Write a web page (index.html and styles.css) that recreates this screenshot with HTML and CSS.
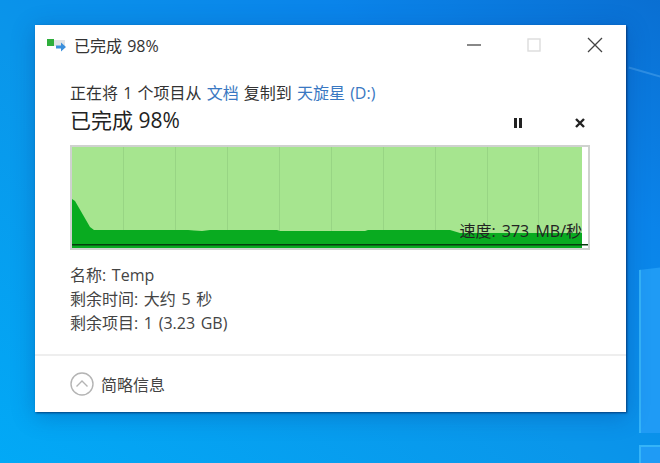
FILE: index.html
```html
<!DOCTYPE html>
<html lang="zh-CN">
<head>
    <meta charset="UTF-8">
    <meta name="viewport" content="width=device-width, initial-scale=1.0">
    <title>已完成 98%</title>
    <link rel="stylesheet" href="styles.css">
</head>
<body>
    <div class="desktop">
        <div class="streak"></div>
        <div class="logo-pane pane-top"></div>
        <div class="logo-pane pane-bottom"></div>

        <div class="copy-window">
            <div class="title-bar">
                <svg class="title-icon" width="20" height="16" viewBox="0 0 20 16">
                    <rect x="0" y="2" width="7" height="7" fill="#2fae3c"/>
                    <rect x="7" y="3" width="11" height="6" fill="#dfe3e6"/>
                    <path d="M9 8.500h5V5.500l5 4.500-5 4.500v-3H9z" fill="#3a8fdc"/>
                </svg>
                <span class="title-text">已完成 98%</span>
                <div class="window-controls">
                    <svg width="14" height="14" viewBox="0 0 14 14"><path d="M0 7h14" stroke="#555" stroke-width="1.4"/></svg>
                    <svg width="14" height="14" viewBox="0 0 14 14"><rect x="1" y="1" width="12" height="12" fill="none" stroke="#dcdcdc" stroke-width="1.4"/></svg>
                    <svg width="16" height="16" viewBox="0 0 16 16"><path d="M1 1l14 14M15 1L1 15" stroke="#444" stroke-width="1.3"/></svg>
                </div>
            </div>

            <div class="content">
                <p class="copy-line">正在将 1 个项目从 <a class="link">文档</a> 复制到 <a class="link">天旋星 (D:)</a></p>
                <div class="progress-head">
                    <h1>已完成 98%</h1>
                    <div class="progress-actions">
                        <svg width="12" height="12" viewBox="0 0 12 12"><path d="M2 1h3v10H2zM7 1h3v10H7z" fill="#222"/></svg>
                        <svg width="12" height="12" viewBox="0 0 12 12"><path d="M2 2l8 8M10 2l-8 8" stroke="#222" stroke-width="2.4"/></svg>
                    </div>
                </div>

                <div class="graph">
                    <svg class="graph-svg" width="516" height="101" viewBox="0 0 516 101">
                        <rect x="0" y="0" width="510" height="101" fill="#a6e58f"/>
                        <path d="M51.500 0V84M103.500 0V84M155.500 0V84M207.500 0V84M259.500 0V84M311.500 0V84M363.500 0V84M415.500 0V84M466.500 0V84" stroke="#98d584" stroke-width="1"/>
                        <path d="M0 52L3 54L18 80L22 83H116L122 83.500L130 84L138 83H205L208 84H293L296 83H378L388 86H510V101H0Z" fill="#09ab20"/>
                        <rect x="0" y="97" width="516" height="1.500" fill="#063d0e"/>
                    </svg>
                    <span class="speed">速度: 373 MB/秒</span>
                </div>

                <div class="details">
                    <div>名称: Temp</div>
                    <div>剩余时间: 大约 5 秒</div>
                    <div>剩余项目: 1 (3.23 GB)</div>
                </div>
            </div>

            <div class="footer">
                <svg width="24" height="24" viewBox="0 0 24 24">
                    <circle cx="12" cy="12" r="11" fill="none" stroke="#b4b4b4" stroke-width="1.4"/>
                    <path d="M6.500 14.500L12 9l5.500 5.500" fill="none" stroke="#b4b4b4" stroke-width="1.4"/>
                </svg>
                <span>简略信息</span>
            </div>
        </div>
    </div>
</body>
</html>
```

FILE: styles.css
```css
html, body {
    margin: 0;
    padding: 0;
}
body {
    font-family: "Open Sans", "Noto Sans CJK SC", sans-serif;
    color: #333;
}
.desktop {
    position: relative;
    width: 660px;
    height: 463px;
    padding: 25px 0 0 35px;
    box-sizing: border-box;
    overflow: hidden;
    background: linear-gradient(to top right, #02a9f6 0%, #0a96ea 45%, #0a84ea 75%, #0a6fd2 100%);
}
.streak {
    position: absolute;
    top: 72px;
    left: 628px;
    width: 40px;
    height: 2px;
    background: rgba(130, 200, 250, 0.3);
    transform: rotate(16deg);
}
.logo-pane {
    position: absolute;
    left: 639px;
    width: 30px;
    background: #1f9bf5;
    border-left: 2px solid #35b4f8;
}
.pane-top {
    top: 266px;
    height: 167px;
    clip-path: polygon(0 4px, 100% 0, 100% 100%, 0 100%);
}
.pane-bottom {
    top: 445px;
    height: 30px;
    border-top: 2px solid #35b4f8;
}
.copy-window {
    position: relative;
    width: 591px;
    height: 387px;
    background: #fff;
    box-shadow: 1px 1px 2px rgba(0, 30, 80, 0.7), 0 4px 22px rgba(0, 50, 130, 0.3);
    display: flex;
    flex-direction: column;
}
.title-bar {
    display: flex;
    align-items: center;
    height: 40px;
    padding-left: 12px;
}
.title-icon {
    margin-right: 7px;
}
.title-text {
    font-size: 16px;
    word-spacing: 1px;
    color: #333;
}
.window-controls {
    display: flex;
    align-items: center;
    gap: 46px;
    margin-left: auto;
    margin-right: 23px;
}
.content {
    flex: 1;
    padding: 18px 35px 0;
}
.copy-line {
    margin: 0;
    font-size: 16px;
    line-height: 20px;
    word-spacing: 1px;
    color: #333;
}
.link {
    color: #3a78c2;
}
.progress-head {
    display: flex;
    align-items: center;
    justify-content: space-between;
    height: 28px;
    margin-top: 2px;
}
h1 {
    margin: 0;
    font-size: 21px;
    font-weight: 400;
    color: #222;
}
.progress-actions {
    display: flex;
    gap: 50px;
    margin: 8px 5px 0 0;
}
.graph {
    position: relative;
    width: 516px;
    height: 101px;
    margin-top: 12px;
    border: 2px solid #cfd2cf;
}
.graph-svg {
    display: block;
}
.speed {
    position: absolute;
    right: 6px;
    bottom: 7px;
    font-size: 16px;
    line-height: 20px;
    word-spacing: 2px;
    color: #222;
}
.details {
    margin-top: 13px;
    font-size: 16px;
    line-height: 24px;
    word-spacing: 1.5px;
    color: #444;
}
.footer {
    display: flex;
    align-items: center;
    gap: 7px;
    height: 58px;
    padding-left: 35px;
    border-top: 2px solid #eee;
    box-sizing: border-box;
    font-size: 16px;
    color: #444;
}
```
